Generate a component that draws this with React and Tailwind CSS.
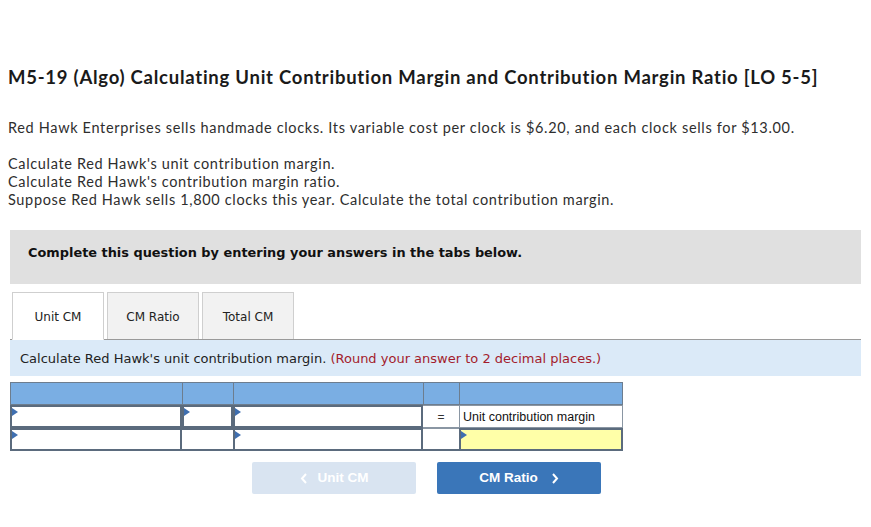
import React from 'react';

const verdana = { fontFamily: '"DejaVu Sans", Verdana, sans-serif' };

function Flag() {
  return (
    <span className="absolute left-0 top-[1px] w-0 h-0 border-t-[4px] border-b-[4px] border-l-[6px] border-t-transparent border-b-transparent border-l-[#3f6fb0]" />
  );
}

function InputCell({ flag = true, bg = 'bg-white', children }) {
  return (
    <div className={`relative h-[23px] border-2 border-[#5b6b7d] ${bg} flex items-center`}>
      {flag && <Flag />}
      {children}
    </div>
  );
}

export default function App() {
  const tabs = ['Unit CM', 'CM Ratio', 'Total CM'];
  const cols = 'grid grid-cols-[172px_51px_190px_36px_164px] w-[613px]';

  return (
    <div className="w-[871px] h-[527px] bg-white text-[#222] overflow-hidden">
      <div className="pt-[66px] px-2" style={{ fontFamily: 'Lato, "Open Sans", sans-serif' }}>
        <h1 className="text-[18.5px] font-bold text-[#1a1a1a] leading-[22px] tracking-[0.75px] whitespace-nowrap">
          M5-19 (Algo) Calculating Unit Contribution Margin and Contribution Margin Ratio [LO 5-5]
        </h1>
        <p className="mt-[31px] text-[14.5px] leading-[18px] text-[#2e2e2e] tracking-[0.67px] whitespace-nowrap">
          Red Hawk Enterprises sells handmade clocks. Its variable cost per clock is $6.20, and each clock sells for $13.00.
        </p>
        <div className="mt-[18px] text-[14.5px] leading-[18px] text-[#2e2e2e] tracking-[0.65px]">
          <p>Calculate Red Hawk's unit contribution margin.</p>
          <p>Calculate Red Hawk's contribution margin ratio.</p>
          <p>Suppose Red Hawk sells 1,800 clocks this year. Calculate the total contribution margin.</p>
        </div>
      </div>

      <div className="mx-[10px] w-[851px]" style={verdana}>
        <div className="mt-[21px] h-[54px] bg-[#e0e0e0] flex items-center pl-[18px] pb-[8px]">
          <span className="text-[12.9px] font-bold text-[#111]">
            Complete this question by entering your answers in the tabs below.
          </span>
        </div>

        <div className="mt-[8px] flex items-end gap-[3px] pl-[2px] border-b border-[#9a9a9a] h-[48px]">
          {tabs.map((t, i) => (
            <div
              key={t}
              className={`w-[92px] h-[47px] flex items-center justify-center pt-[2px] text-[12px] border border-[#cfcfcf] ${
                i === 0 ? 'bg-white border-b-white border-[#bdbdbd] -mb-px h-[48px]' : 'bg-[#f2f2f2] border-b-0'
              }`}
            >
              {t}
            </div>
          ))}
        </div>

        <div className="h-[36px] bg-[#dbeaf8] flex items-center pl-[10px] pt-[1px] text-[13px] text-[#222]">
          Calculate Red Hawk's unit contribution margin.&nbsp;
          <span className="text-[#a31c2c]">(Round your answer to 2 decimal places.)</span>
        </div>

        <div className="mt-[6px]">
          <div className={`${cols} h-[23px] bg-[#7aaee3] border border-[#6d7d8e]`}>
            <div className="border-r border-[#6d7d8e]" />
            <div className="border-r border-[#6d7d8e]" />
            <div className="border-r border-[#6d7d8e]" />
            <div className="border-r border-[#6d7d8e]" />
            <div />
          </div>
          <div className={cols}>
            <InputCell />
            <InputCell />
            <InputCell />
            <div className="h-[23px] border-y border-[#8a96a3] flex items-center justify-center text-[12px] text-[#333]" style={{ fontFamily: '"Liberation Sans", Arial, sans-serif' }}>
              =
            </div>
            <div className="h-[23px] border border-[#8a96a3] flex items-center pl-[3px] pt-[1px] text-[12.5px] text-[#111]" style={{ fontFamily: '"Liberation Sans", Arial, sans-serif' }}>
              Unit contribution margin
            </div>
          </div>
          <div className={cols}>
            <InputCell />
            <div className="h-[23px] border-y-2 border-[#5b6b7d] bg-white" />
            <InputCell />
            <div className="h-[23px] border-y border-b-2 border-[#8a96a3] border-b-[#5b6b7d] bg-white" />
            <InputCell bg="bg-[#ffffa8]" />
          </div>
        </div>

        <div className="mt-[11px] flex gap-[21px] pl-[242px]" style={{ fontFamily: '"Liberation Sans", Arial, sans-serif' }}>
          <div className="w-[164px] h-[32px] bg-[#d9e4f1] rounded-[2px] flex items-center justify-center gap-[10px] text-white font-bold text-[13.5px]">
            <svg width="8" height="11" viewBox="0 0 8 11" fill="none" stroke="white" strokeWidth="2"><path d="M6 1 L2 5.5 L6 10" /></svg>
            <span>Unit CM</span>
          </div>
          <div className="w-[164px] h-[32px] bg-[#3a76b9] rounded-[2px] flex items-center justify-center gap-[13px] text-white font-bold text-[13.5px]">
            <span>CM Ratio</span>
            <svg width="8" height="11" viewBox="0 0 8 11" fill="none" stroke="white" strokeWidth="2"><path d="M2 1 L6 5.5 L2 10" /></svg>
          </div>
        </div>
      </div>
    </div>
  );
}
